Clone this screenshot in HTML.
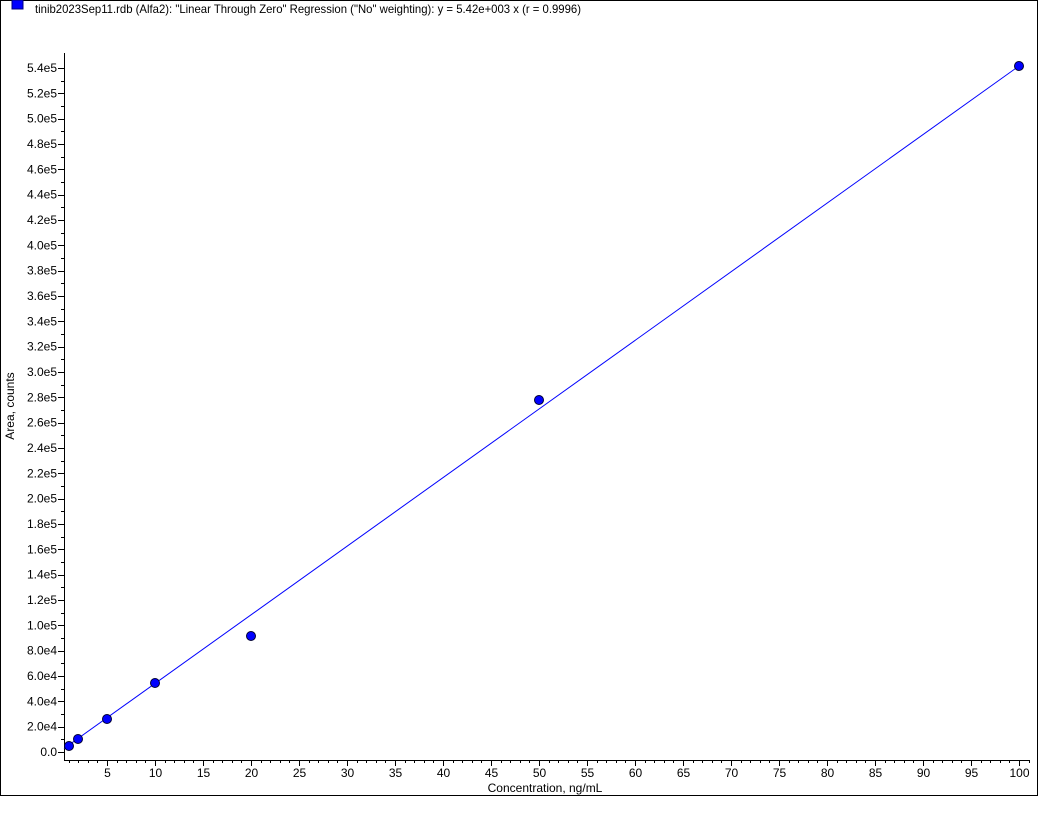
<!DOCTYPE html>
<html><head><meta charset="utf-8"><style>
html,body{margin:0;padding:0;background:#fff;width:1055px;height:817px;overflow:hidden}
svg{display:block;font-family:"Liberation Sans",Arial,sans-serif}
</style></head><body>
<svg id="s" width="1055" height="817" xmlns="http://www.w3.org/2000/svg">
<rect x="0.5" y="0.5" width="1037" height="795" fill="#fff" stroke="#000" stroke-width="1"/>
<rect x="0" y="797" width="1055" height="20" fill="#fff"/>
<rect x="12" y="0" width="11" height="9" fill="#0000ff" stroke="#000080" stroke-width="1"/>
<text x="35" y="13" font-size="12" fill="#000" textLength="546" lengthAdjust="spacingAndGlyphs">tinib2023Sep11.rdb (Alfa2): "Linear Through Zero" Regression ("No" weighting): y = 5.42e+003 x (r = 0.9996)</text>
<line x1="64.5" y1="53" x2="64.5" y2="760" stroke="#000"/>
<line x1="64" y1="760.5" x2="1030" y2="760.5" stroke="#000"/>
<g id="ticks"></g>
<text transform="translate(14,406) rotate(-90)" font-size="12" text-anchor="middle">Area, counts</text>
<text x="545" y="792" font-size="12" text-anchor="middle">Concentration, ng/mL</text>
<line x1="64" y1="748.5" x2="1019" y2="66" stroke="#0000ff" stroke-width="1"/>
<g fill="#0000ff" stroke="#000033" stroke-width="1">
<circle cx="69" cy="746" r="4.5"/>
<circle cx="78" cy="739" r="4.5"/>
<circle cx="107" cy="719" r="4.5"/>
<circle cx="155" cy="683" r="4.5"/>
<circle cx="251" cy="636" r="4.5"/>
<circle cx="539" cy="400" r="4.5"/>
<circle cx="1019" cy="66" r="4.5"/>
</g>
</svg>
<script>
var g=document.getElementById('ticks'),h='';
for(var i=0;i<=27;i++){var y=752-i*684/27;var yy=Math.round(y)+0.5;
h+='<line x1="58" y1="'+yy+'" x2="64" y2="'+yy+'" stroke="#000"/>';
var v=i*2e4,l=i==0?'0.0':(v<1e5?(v/1e4).toFixed(1)+'e4':(v/1e5).toFixed(1)+'e5');
h+='<text x="57" y="'+(y+4)+'" font-size="12" text-anchor="end">'+l+'</text>';
if(i<27){var y2=Math.round(y-342/27)+0.5;h+='<line x1="61" y1="'+y2+'" x2="64" y2="'+y2+'" stroke="#000"/>';}}
for(var u=1;u<=101;u++){var x=Math.round(59+u*9.6)+0.5;if(x>1030)break;
if(u%5==0){h+='<line x1="'+x+'" y1="760" x2="'+x+'" y2="766" stroke="#000"/>';h+='<text x="'+x+'" y="777" font-size="12" text-anchor="middle">'+u+'</text>';}
else h+='<line x1="'+x+'" y1="760" x2="'+x+'" y2="763" stroke="#000"/>';}
g.innerHTML=h;
</script>
</body></html>
